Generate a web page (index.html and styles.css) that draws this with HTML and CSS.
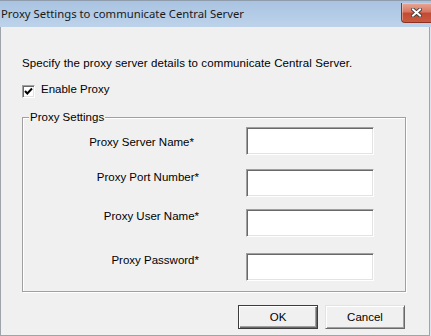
FILE: index.html
```html
<!DOCTYPE html>
<html lang="en">
<head>
    <meta charset="UTF-8">
    <meta name="viewport" content="width=device-width, initial-scale=1.0">
    <title>Proxy Settings</title>
    <link rel="stylesheet" href="styles.css">
</head>
<body>
    <div class="window">
        <div class="titlebar">
            <span class="title">Proxy Settings to communicate Central Server</span>
            <span class="close-btn">
                <svg width="11" height="9" viewBox="0 0 11 9">
                    <path d="M2 1.5 L9 7.5 M9 1.5 L2 7.5" stroke="#3d3d3d" stroke-width="3.8" stroke-linecap="square"/>
                    <path d="M2 1.5 L9 7.5 M9 1.5 L2 7.5" stroke="#ffffff" stroke-width="2" stroke-linecap="square"/>
                </svg>
            </span>
        </div>

        <div class="dialog">
            <p class="intro">Specify the proxy server details to communicate Central Server.</p>

            <label class="check-row">
                <span class="checkbox">
                    <svg width="11" height="11" viewBox="0 0 11 11">
                        <path d="M2 5 L4.3 7.5 L9 2.5" fill="none" stroke="#000" stroke-width="2"/>
                    </svg>
                </span>
                Enable Proxy
            </label>

            <fieldset class="group">
                <legend>Proxy Settings</legend>

                <div class="field field-server">
                    <label for="server">Proxy Server Name*</label>
                    <input type="text" id="server">
                </div>
                <div class="field field-port">
                    <label for="port">Proxy Port Number*</label>
                    <input type="text" id="port">
                </div>
                <div class="field field-user">
                    <label for="user">Proxy User Name*</label>
                    <input type="text" id="user">
                </div>
                <div class="field field-password">
                    <label for="password">Proxy Password*</label>
                    <input type="password" id="password">
                </div>
            </fieldset>

            <div class="buttons">
                <button class="btn btn-default">OK</button>
                <button class="btn">Cancel</button>
            </div>
        </div>
    </div>
</body>
</html>
```

FILE: styles.css
```css
html, body {
    margin: 0;
    padding: 0;
}

body {
    background: #dde6ef;
    font-family: "Liberation Sans", Arial, sans-serif;
    font-size: 11.5px;
    color: #000;
}

.window {
    width: 431px;
    height: 336px;
    overflow: hidden;
}

.titlebar {
    height: 27px;
    box-sizing: border-box;
    border-top: 1px solid #8f9cab;
    background: linear-gradient(to bottom, #a9c3e1, #bdd3ea);
    display: flex;
    justify-content: space-between;
    align-items: flex-start;
}

.title {
    font-family: "Noto Sans", "Liberation Sans", sans-serif;
    font-size: 11.3px;
    line-height: 16px;
    margin-top: 5px;
    padding-left: 1px;
    color: #1a1a1a;
}

.close-btn {
    width: 30px;
    height: 20px;
    margin-top: 2px;
    box-sizing: border-box;
    border: 1px solid #8a3325;
    border-right: none;
    border-top: none;
    border-radius: 0 0 0 4px;
    background: linear-gradient(to bottom, #e9a796 0%, #d87965 45%, #c34b33 55%, #c95a40 100%);
    box-shadow: inset 1px 1px 0 rgba(255, 255, 255, 0.35);
    display: flex;
    align-items: center;
    padding-left: 9px;
}

.dialog {
    width: 430px;
    height: 309px;
    box-sizing: border-box;
    background: #f0f0f0;
    border-left: 1px solid #9ea4aa;
    border-right: 1px solid #9ea4aa;
    border-bottom: 1px solid #9ea4aa;
    padding: 29px 0 0 21px;
}

.intro {
    margin: 0;
    line-height: 14px;
    letter-spacing: 0.1px;
}

.check-row {
    display: flex;
    align-items: flex-start;
    margin-top: 12px;
    line-height: 14px;
}

.checkbox {
    width: 13px;
    height: 13px;
    box-sizing: border-box;
    margin-top: 3px;
    margin-right: 6px;
    background: #fff;
    border: 1px solid;
    border-color: #a0a0a0 #fff #fff #a0a0a0;
    box-shadow: inset 1px 1px 0 #696969, inset -1px -1px 0 #e3e3e3;
    display: flex;
    align-items: center;
    justify-content: center;
}

.group {
    width: 384px;
    box-sizing: border-box;
    min-width: 0;
    margin: 12px 0 0 0;
    padding: 3px 0 10px 6px;
    border: 1px solid #a0a0a0;
    box-shadow: inset 1px 1px 0 #fff, 1px 1px 0 #fff;
}

.group legend {
    padding: 0 1px;
    line-height: 14px;
    background: #f0f0f0;
}

.field {
    display: flex;
    align-items: flex-start;
}

.field label {
    width: 170px;
    box-sizing: border-box;
    text-align: right;
    line-height: 14px;
}

.field input {
    width: 128px;
    height: 28px;
    box-sizing: border-box;
    margin: 0 0 0 47px;
    padding: 0;
    background: #fff;
    border: 1px solid;
    border-color: #a0a0a0 #fff #fff #a0a0a0;
    box-shadow: inset 1px 1px 0 #696969, inset -1px -1px 0 #e3e3e3;
    outline: none;
}

.field-server label {
    padding-top: 8px;
    padding-right: 5px;
}

.field-port {
    margin-top: 14px;
}

.field-port label {
    padding-top: 1px;
}

.field-user {
    margin-top: 12px;
}

.field-password {
    margin-top: 16px;
}

.buttons {
    width: 384px;
    box-sizing: border-box;
    margin-top: 13px;
    padding-right: 1px;
    display: flex;
    justify-content: flex-end;
    gap: 7px;
}

.btn {
    width: 80px;
    height: 24px;
    box-sizing: border-box;
    padding: 0;
    font-family: "Liberation Sans", Arial, sans-serif;
    font-size: 11.5px;
    color: #000;
    background: #f0f0f0;
    border: 1px solid;
    border-color: #e3e3e3 #696969 #696969 #e3e3e3;
    box-shadow: inset 1px 1px 0 #fff, inset -1px -1px 0 #a0a0a0;
}

.btn-default {
    border: 1px solid #3c3c3c;
    box-shadow: inset 1px 1px 0 #fff, inset -1px -1px 0 #696969, inset -2px -2px 0 #a0a0a0;
}
```
